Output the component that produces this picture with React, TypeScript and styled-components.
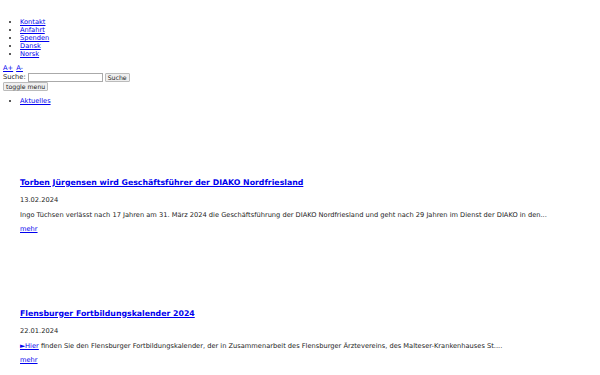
import React from "react";
import styled, { createGlobalStyle } from "styled-components";

const Global = createGlobalStyle`
  html, body { margin: 0; padding: 0; background: #fff; }
  body {
    padding: 4px 3px;
    font-family: "DejaVu Sans", sans-serif;
    font-size: 6.67px;
    line-height: 8px;
    color: #222;
  }
  a { color: #0000ee; text-decoration: underline; }
`;

const TopList = styled.ul`
  margin: 14px 0 7px;
  padding-left: 17px;
  list-style: disc;
`;

const Item = styled.li`
  line-height: 8px;
`;

const FontSizer = styled.div`
  line-height: 7.5px;
  a + a { margin-left: 3px; }
`;

const SearchForm = styled.form`
  display: flex;
  align-items: center;
  gap: 2px;
  height: 9px;
  margin: 0;
`;

const SearchInput = styled.input`
  width: 73px;
  height: 7px;
  padding: 0;
  margin: 0;
  border: 1px solid #aaa;
  font: inherit;
`;

const Btn = styled.button`
  height: 9px;
  padding: 0 2px;
  margin: 0;
  border: 1px solid #bbb;
  border-radius: 1px;
  background: #efefef;
  font-family: "DejaVu Sans", sans-serif;
  font-size: 6.2px;
  line-height: 7px;
  color: #222;
`;

const ToggleRow = styled.div`
  height: 9px;
  display: flex;
`;

const MainNav = styled.ul`
  margin: 6px 0 0;
  padding-left: 17px;
`;

const Article = styled.article`
  padding-left: 17px;
  padding-top: 73px;
`;

const Title = styled.h2`
  margin: 0 0 8px;
  font-size: 7.8px;
  line-height: 10px;
  font-weight: bold;
  a { color: #0000ee; }
`;

const Meta = styled.p`
  margin: 0 0 7px;
  line-height: 8px;
`;

const Teaser = styled.p`
  margin: 0 0 6px;
  line-height: 8px;
`;

const More = styled.p`
  margin: 0 0 3px;
  line-height: 8px;
`;

const articles = [
  {
    title: "Torben Jürgensen wird Geschäftsführer der DIAKO Nordfriesland",
    date: "13.02.2024",
    text: (
      <>
        Ingo Tüchsen verlässt nach 17 Jahren am 31. März 2024 die Geschäftsführung der DIAKO Nordfriesland und geht nach 29 Jahren im Dienst der DIAKO in den...
      </>
    ),
  },
  {
    title: "Flensburger Fortbildungskalender 2024",
    date: "22.01.2024",
    text: (
      <>
        <a href="#">►Hier</a> finden Sie den Flensburger Fortbildungskalender, der in Zusammenarbeit des Flensburger Ärztevereins, des Malteser-Krankenhauses St....
      </>
    ),
  },
];

export default function App() {
  return (
    <>
      <Global />
      <TopList>
        {["Kontakt", "Anfahrt", "Spenden", "Dansk", "Norsk"].map((l) => (
          <Item key={l}>
            <a href="#">{l}</a>
          </Item>
        ))}
      </TopList>
      <FontSizer>
        <a href="#">A+</a>
        <a href="#">A-</a>
      </FontSizer>
      <SearchForm onSubmit={(e) => e.preventDefault()}>
        <span>Suche:</span>
        <SearchInput type="text" />
        <Btn type="submit">Suche</Btn>
      </SearchForm>
      <ToggleRow>
        <Btn type="button">toggle menu</Btn>
      </ToggleRow>
      <MainNav>
        <Item>
          <a href="#">Aktuelles</a>
        </Item>
      </MainNav>
      {articles.map((a) => (
        <Article key={a.title}>
          <Title>
            <a href="#">{a.title}</a>
          </Title>
          <Meta>{a.date}</Meta>
          <Teaser>{a.text}</Teaser>
          <More>
            <a href="#">mehr</a>
          </More>
        </Article>
      ))}
    </>
  );
}
